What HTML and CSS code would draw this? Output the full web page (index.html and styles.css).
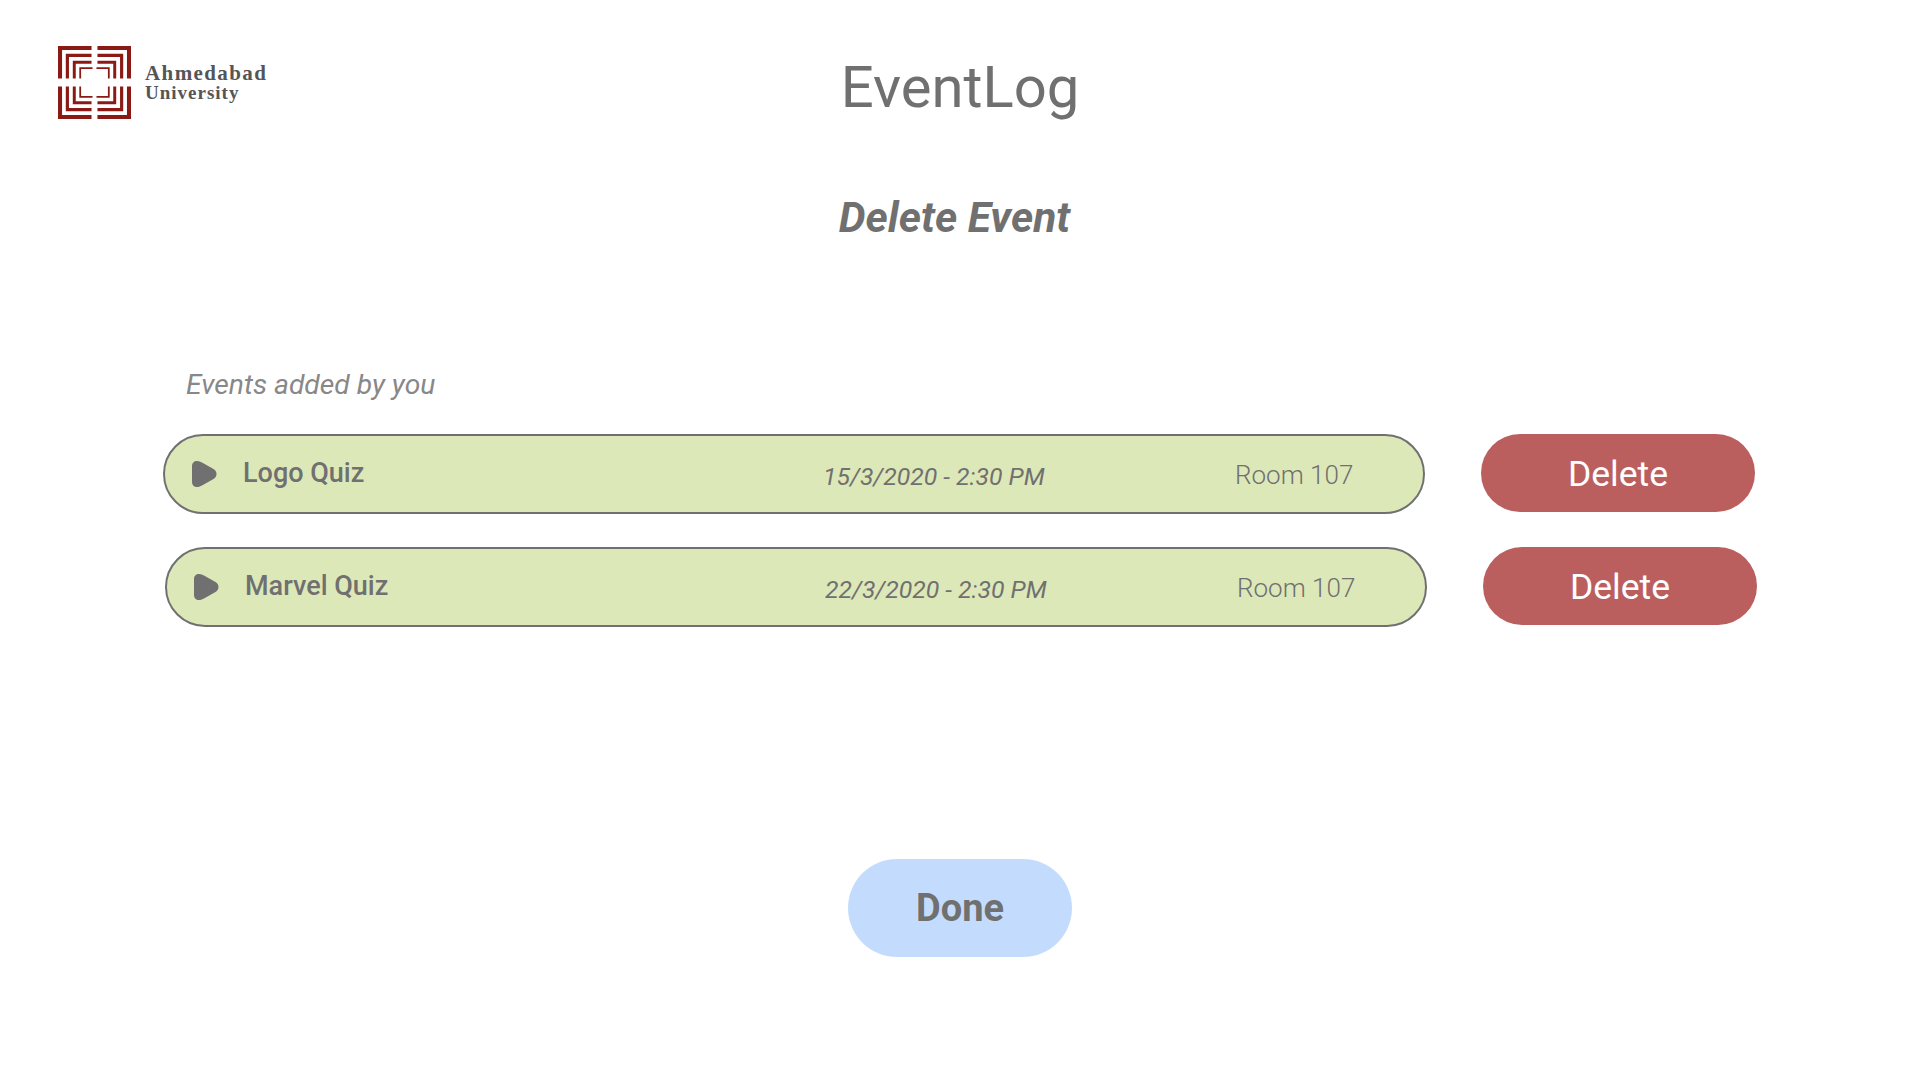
FILE: index.html
```html
<!DOCTYPE html>
<html lang="en">
<head>
    <meta charset="UTF-8">
    <meta name="viewport" content="width=device-width, initial-scale=1.0">
    <title>EventLog - Delete Event</title>
    <link rel="stylesheet" href="styles.css">
</head>
<body>
    <header class="top-bar">
        <div class="brand">
            <svg class="brand-mark" viewBox="0 0 74 74" width="73" height="73" aria-hidden="true">
                <defs>
                    <g id="corner">
                        <path class="ring-1" d="M2 33V2H34"/>
                        <path class="ring-2" d="M9.500 33V9.500H34"/>
                        <path class="ring-3" d="M16.500 33V16.500H34"/>
                        <path class="ring-4" d="M22.500 33V22.500H35"/>
                    </g>
                </defs>
                <use href="#corner"/>
                <use href="#corner" transform="translate(74 0) scale(-1 1)"/>
                <use href="#corner" transform="translate(0 74) scale(1 -1)"/>
                <use href="#corner" transform="translate(74 74) scale(-1 -1)"/>
            </svg>
            <div class="brand-name">
                <span class="brand-line-1">Ahmedabad</span>
                <span class="brand-line-2">University</span>
            </div>
        </div>
        <div class="app-title">EventLog</div>
    </header>

    <h1 class="page-title">Delete Event</h1>

    <main class="events">
        <p class="events-label">Events added by you</p>

        <div class="event-row">
            <div class="event-pill">
                <svg class="event-icon" viewBox="0 0 26 26" width="26" height="26" aria-hidden="true">
                    <path d="M5 0C7 0 8.500 .8 10 1.600L21.500 8C25.500 10.400 25.500 15.600 21.500 18L10 24.400C8.500 25.200 7 26 5 26C2 26 0 24 0 21V5C0 2 2 0 5 0Z"/>
                </svg>
                <span class="event-name">Logo Quiz</span>
                <span class="event-date">15/3/2020 - 2:30 PM</span>
                <span class="event-room">Room 107</span>
            </div>
            <button class="delete-btn">Delete</button>
        </div>

        <div class="event-row event-row-shifted">
            <div class="event-pill">
                <svg class="event-icon" viewBox="0 0 26 26" width="26" height="26" aria-hidden="true">
                    <path d="M5 0C7 0 8.500 .8 10 1.600L21.500 8C25.500 10.400 25.500 15.600 21.500 18L10 24.400C8.500 25.200 7 26 5 26C2 26 0 24 0 21V5C0 2 2 0 5 0Z"/>
                </svg>
                <span class="event-name">Marvel Quiz</span>
                <span class="event-date">22/3/2020 - 2:30 PM</span>
                <span class="event-room">Room 107</span>
            </div>
            <button class="delete-btn">Delete</button>
        </div>
    </main>

    <div class="actions">
        <button class="done-btn">Done</button>
    </div>
</body>
</html>
```

FILE: styles.css
```css
body {
    margin: 0;
    background-color: #fff;
    color: #707070;
    font-family: Roboto, Arial, sans-serif;
}

.top-bar {
    display: grid;
    grid-template-columns: 1fr auto 1fr;
    height: 130px;
    padding-left: 58px;
    padding-right: 58px;
}
.brand {
    display: flex;
    align-items: flex-start;
    gap: 14px;
    padding-top: 46px;
}
.brand-mark {
    fill: none;
    stroke: #8b1a14;
}
.ring-1 { stroke-width: 4.2; }
.ring-2 { stroke-width: 3.2; }
.ring-3 { stroke-width: 3; }
.ring-4 { stroke-width: 1.8; }
.brand-name {
    display: flex;
    flex-direction: column;
    padding-top: 18px;
    color: #555;
    font-family: "Liberation Serif", serif;
    font-weight: bold;
    line-height: 19px;
}
.brand-line-1 {
    font-size: 21px;
    letter-spacing: 1.4px;
}
.brand-line-2 {
    font-size: 19px;
    letter-spacing: 1px;
}
.app-title {
    padding-top: 53px;
    font-size: 58px;
    line-height: 68px;
}

.page-title {
    margin: 64px 0 0;
    text-align: center;
    padding-right: 11px;
    font-size: 42.5px;
    line-height: 48px;
    font-style: italic;
    font-weight: bold;
}

.events {
    margin-top: 127px;
}
.events-label {
    margin: 0 0 33px 186px;
    color: #888;
    font-size: 28.25px;
    line-height: 32px;
    font-style: italic;
}
.event-row {
    display: flex;
    align-items: flex-start;
    gap: 56px;
    margin-left: 163px;
    margin-bottom: 33px;
}
.event-row-shifted {
    margin-left: 165px;
}
.event-pill {
    box-sizing: border-box;
    display: grid;
    grid-template-columns: 78px 580px 412px 1fr;
    align-items: center;
    width: 1262px;
    height: 80px;
    border: 2px solid #707070;
    border-radius: 40px;
    background-color: #dde8b8;
}
.event-icon {
    margin-left: 27px;
    fill: #707070;
}
.event-name {
    font-size: 27px;
    font-weight: 500;
    padding-bottom: 2px;
}
.event-date {
    font-size: 24.75px;
    font-style: italic;
    padding-top: 5px;
}
.event-room {
    font-size: 26px;
    font-weight: 300;
    padding-top: 2px;
}
.delete-btn {
    width: 274px;
    height: 78px;
    padding-top: 2px;
    border: none;
    border-radius: 39px;
    background-color: #bb5e5e;
    color: #fff;
    font-family: Roboto, Arial, sans-serif;
    font-size: 35.5px;
}

.actions {
    display: flex;
    justify-content: center;
    margin-top: 232px;
}
.done-btn {
    width: 224px;
    height: 98px;
    border: none;
    border-radius: 49px;
    background-color: #c3dcfe;
    color: #707070;
    font-family: Roboto, Arial, sans-serif;
    font-size: 38px;
    font-weight: bold;
}
```
